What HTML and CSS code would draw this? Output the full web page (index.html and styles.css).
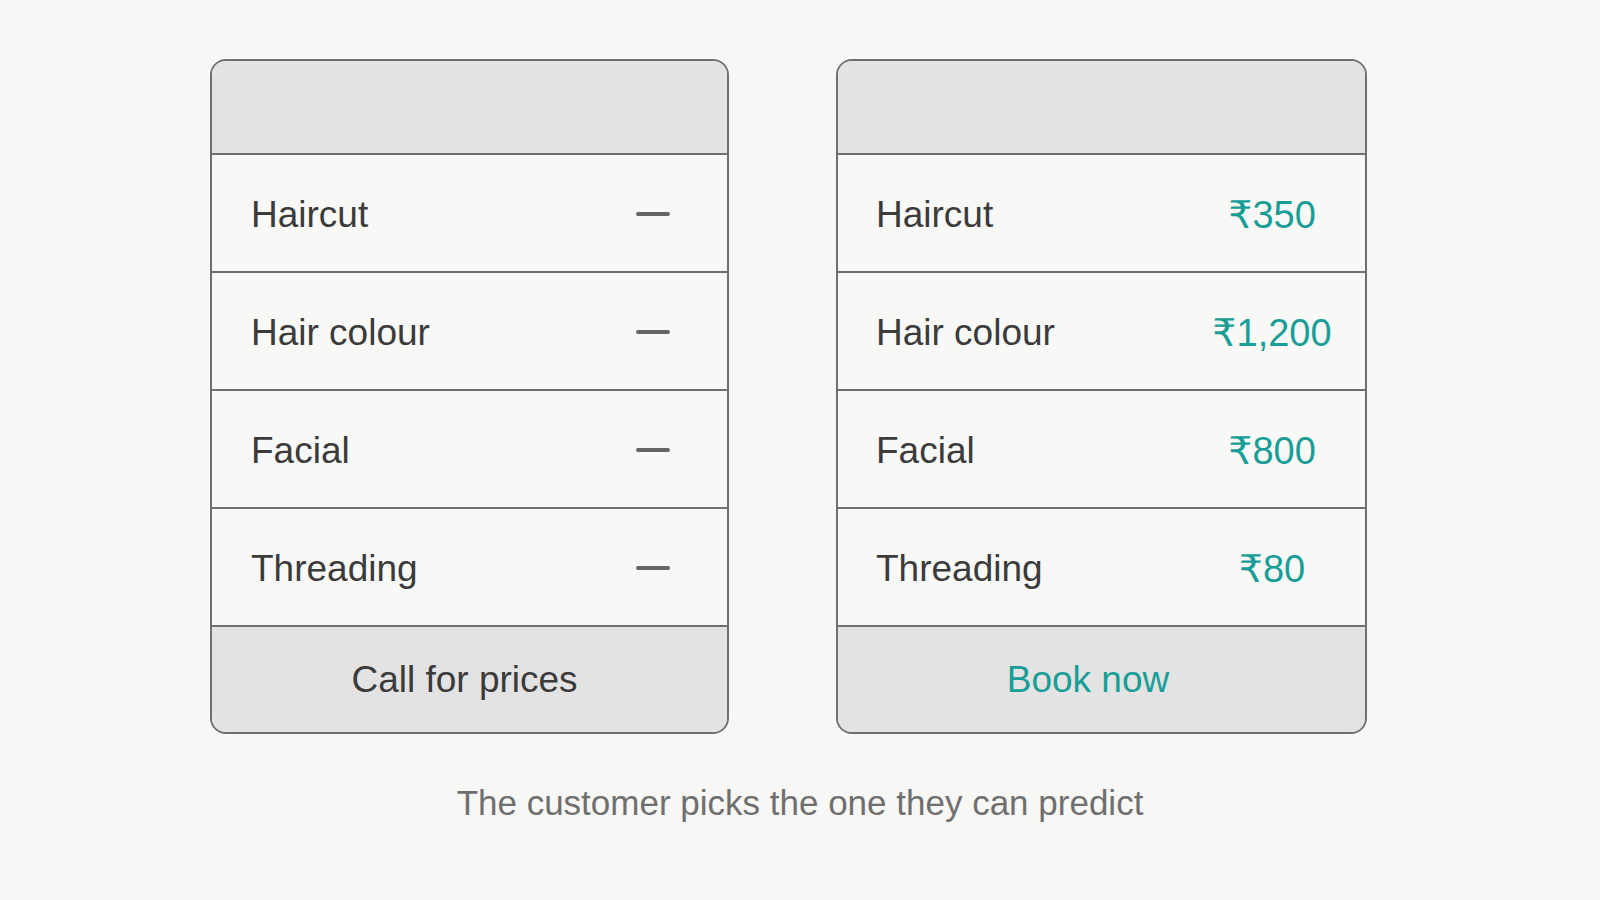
FILE: index.html
```html
<!DOCTYPE html>
<html lang="en">
<head>
<meta charset="utf-8">
<title>Price list comparison</title>
<link rel="stylesheet" href="styles.css">
</head>
<body>
<main class="page">
  <div class="compare">
    <section class="card card--plain">
      <div class="card__head"></div>
      <div class="row"><span class="row__label">Haircut</span><span class="row__value"><span class="dash" aria-label="—"></span></span></div>
      <div class="row"><span class="row__label">Hair colour</span><span class="row__value"><span class="dash" aria-label="—"></span></span></div>
      <div class="row"><span class="row__label">Facial</span><span class="row__value"><span class="dash" aria-label="—"></span></span></div>
      <div class="row"><span class="row__label">Threading</span><span class="row__value"><span class="dash" aria-label="—"></span></span></div>
      <div class="card__foot">Call for prices</div>
    </section>
    <section class="card card--priced">
      <div class="card__head"></div>
      <div class="row"><span class="row__label">Haircut</span><span class="row__value price">₹350</span></div>
      <div class="row"><span class="row__label">Hair colour</span><span class="row__value price">₹1,200</span></div>
      <div class="row"><span class="row__label">Facial</span><span class="row__value price">₹800</span></div>
      <div class="row"><span class="row__label">Threading</span><span class="row__value price">₹80</span></div>
      <div class="card__foot card__foot--cta">Book now</div>
    </section>
  </div>
  <p class="caption">The customer picks the one they can predict</p>
</main>
</body>
</html>
```

FILE: styles.css
```css
* { box-sizing: border-box; }

html, body {
  margin: 0;
  padding: 0;
  background: #f7f7f5;
}

body {
  font-family: "Liberation Sans", Arial, "DejaVu Sans", sans-serif;
  color: #3d3d3d;
  width: 1600px;
  height: 900px;
  overflow: hidden;
}

.page {
  display: flex;
  flex-direction: column;
  padding-top: 59px;
}

.compare {
  display: flex;
  gap: 107px;
  padding-left: 210px;
}

.card {
  border: 2px solid #6f6f6f;
  border-radius: 16px;
  overflow: hidden;
  background: #f8f8f7;
  display: flex;
  flex-direction: column;
}

.card--plain { width: 519px; }
.card--priced { width: 531px; }

.card__head {
  height: 94px;
  background: #e3e3e3;
  border-bottom: 2px solid #707070;
}

.row {
  height: 118px;
  border-bottom: 2px solid #707070;
  display: grid;
  grid-template-columns: 1fr 140px;
  align-items: center;
  padding-left: 39px;
  padding-top: 4px;
  font-size: 37px;
}

.card--plain .row { padding-right: 4px; }
.card--priced .row { padding-right: 23px; padding-left: 38px; }

.row__label {
  color: #3b3b3b;
}

.row__value {
  display: flex;
  justify-content: center;
  align-items: center;
}

.dash {
  display: block;
  width: 34px;
  height: 4px;
  border-radius: 2px;
  background: #666666;
  margin-top: -2px;
}

.price {
  color: #189e97;
  font-size: 38px;
}

.card__foot {
  height: 105px;
  background: #e3e3e3;
  display: flex;
  align-items: center;
  justify-content: center;
  font-size: 37px;
  color: #3b3b3b;
  padding-right: 10px;
}

.card__foot--cta {
  color: #189e97;
  padding-right: 27px;
}

.caption {
  margin: 49px 0 0;
  text-align: center;
  font-size: 35px;
  line-height: 40px;
  color: #6f6f6f;
}
```
